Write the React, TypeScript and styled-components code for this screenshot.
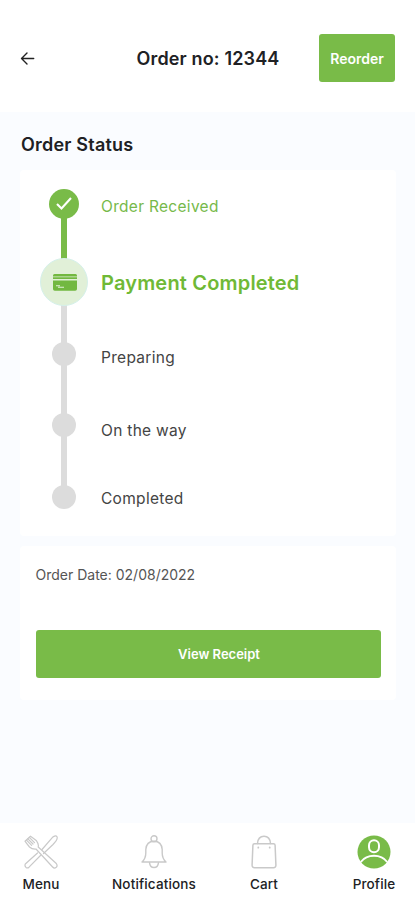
import React from "react";
import styled, { createGlobalStyle, css } from "styled-components";

const green = "#79bb48";
const idle = "#dcdcdc";

const GlobalStyle = createGlobalStyle`
  * { box-sizing: border-box; }
  body {
    margin: 0;
    background: #fafcff;
    font-family: Inter, "Liberation Sans", sans-serif;
    color: #202124;
  }
  button { font-family: inherit; border: 0; padding: 0; cursor: pointer; }
`;

const Screen = styled.div`
  display: flex;
  flex-direction: column;
  width: 415px;
  height: 900px;
  background: #fafcff;
`;

const Header = styled.header`
  display: grid;
  grid-template-columns: 76px 1fr 76px;
  align-items: center;
  height: 112px;
  padding: 4px 20px 0;
  background: #fff;
`;

const BackButton = styled.button`
  display: flex;
  width: 16px;
  height: 16px;
  background: none;
`;

const Title = styled.h1`
  margin: 0;
  padding: 1px 0 0 1px;
  font-size: 18px;
  line-height: 24px;
  font-weight: 600;
  letter-spacing: 0.15px;
  text-align: center;
  white-space: nowrap;
`;

const PrimaryButton = styled.button<{ $wide?: boolean }>`
  width: ${(p) => (p.$wide ? "345px" : "76px")};
  height: 48px;
  padding-left: ${(p) => (p.$wide ? "22px" : "0")};
  border-radius: 3px;
  background: ${green};
  color: #fff;
  font-size: ${(p) => (p.$wide ? "13px" : "14px")};
  font-weight: 600;
  white-space: nowrap;
`;

const Content = styled.main`
  flex: 1;
  padding: 20px 19px 0 20px;
`;

const SectionTitle = styled.h2`
  margin: 0 0 13px;
  padding: 0 0 0 1px;
  font-size: 18px;
  line-height: 25px;
  font-weight: 600;
  letter-spacing: 0.2px;
`;

const Card = styled.section`
  border-radius: 4px;
  background: #fff;
`;

const StatusCard = styled(Card)`
  height: 366px;
  padding: 19px 0 0 20px;
`;

const ReceiptCard = styled(Card)`
  display: flex;
  flex-direction: column;
  justify-content: space-between;
  height: 154px;
  margin-top: 10px;
  padding: 19px 16px 22.5px 15.5px;
`;

const OrderDate = styled.p`
  margin: 0;
  font-size: 14px;
  line-height: 20px;
  color: #555;
`;

const Steps = styled.ol`
  margin: 0;
  padding: 0;
  list-style: none;
`;

const Step = styled.li<{ $height: number }>`
  display: grid;
  grid-template-columns: 48px 1fr;
  column-gap: 13px;
  height: ${(p) => p.$height}px;
`;

const Rail = styled.div`
  display: flex;
  flex-direction: column;
  align-items: center;
`;

const Connector = styled.span<{ $done?: boolean }>`
  flex: 1;
  width: 6px;
  margin: -1px 1px -1px 0;
  background: ${(p) => (p.$done ? green : idle)};
`;

type State = "done" | "current" | "todo";

const Marker = styled.span<{ $state: State }>`
  display: flex;
  align-items: center;
  justify-content: center;
  flex: none;
  border-radius: 50%;
  ${(p) =>
    p.$state === "done"
      ? css`width: 30px; height: 30px; margin-right: 1px; background: ${green};`
      : p.$state === "current"
        ? css`width: 48px; height: 48px; padding-left: 1px; background: #e1f0d8; border: 1px solid #d5f0ea; z-index: 1;`
        : css`width: 24px; height: 24px; margin-right: 1px; background: ${idle};`}
`;

const StepLabel = styled.span<{ $state: State; $top: number }>`
  padding-top: ${(p) => p.$top}px;
  line-height: 24px;
  white-space: nowrap;
  ${(p) =>
    p.$state === "current"
      ? css`font-size: 20px; font-weight: 600; letter-spacing: 0.18px; color: #6fb936;`
      : css`font-size: 15.5px; font-weight: 400; letter-spacing: 0.3px; color: ${p.$state === "done" ? "#76b94a" : "#444"};`}
`;

const BottomNav = styled.nav`
  display: grid;
  grid-template-columns: 113px 110px 110px 82px;
  height: 77px;
  background: #fff;
`;

const NavItem = styled.a`
  display: flex;
  flex-direction: column;
  align-items: center;
  gap: 6px;
  width: 82px;
  padding-top: 12px;
  font-size: 13.5px;
  line-height: 19px;
  font-weight: 500;
  letter-spacing: 0.15px;
  white-space: nowrap;
  svg { display: block; flex: none; }
`;

const line = { fill: "none", stroke: "#c9c9c9", strokeWidth: 1.2, strokeLinecap: "round", strokeLinejoin: "round" } as const;

const BackIcon = () => (
  <svg width="16" height="16" viewBox="0 0 16 16" fill="none" stroke="#222" strokeWidth="1.4" strokeLinecap="round" strokeLinejoin="round">
    <path d="M13.700 8.500H1.500M7 3L1.500 8.500L7 14" />
  </svg>
);

const CheckIcon = () => (
  <svg width="18" height="16" viewBox="0 0 18 16" fill="none" stroke="#fff" strokeWidth="2.1">
    <path d="M2 8L6.500 12.500L16 2" />
  </svg>
);

const CardIcon = () => (
  <svg width="24" height="17" viewBox="0 0 24 17">
    <path fill="#72b840" d="M1.500 0h21Q24 0 24 1.500V2.400H0V1.500Q0 0 1.500 0ZM0 3.300h24v1.800H0ZM0 6.600h24V15Q24 16.800 22.200 16.800H1.800Q0 16.800 0 15Z" />
    <path d="M3 11.700h4M5 13.200h6" stroke="#e1f0d8" strokeWidth="1.100" />
  </svg>
);

const CutleryIcon = () => (
  <svg width="34" height="34" viewBox="0 0 34 34" {...line}>
    <path d="M18 14.500L28.500 2.300Q31.800-.2 33 1.700Q34.200 4.200 29 9.500L19.500 18.500M13.500 18L1.300 29Q.4 31 2 32.400Q3.600 33.500 5 32.200L16.500 20.500" />
    <path d="M6.500 1.200Q10 3.600 12.500 5.800Q15 9 14.200 12L32.300 28.500Q34 31 32 32.600Q30.200 33.700 28.600 32L12 14Q8 14.300 5.500 12Q2.500 8.500 1 6.200Z" />
    <path d="M3.900 3.800L9 9M5.300 2.400L10.500 7.600M2.500 5.200L7.600 10.300" />
  </svg>
);

const BellIcon = () => (
  <svg width="26" height="34" viewBox="0 0 26 34" {...line} strokeWidth={1.4}>
    <circle cx="13" cy="3.800" r="3" />
    <path d="M1 27Q4.800 23.500 4.800 18V14.500Q5.400 6.200 13 6.200Q20.600 6.200 21.200 14.500V18Q21.200 23.500 25 27Z" />
    <path d="M8.500 27.600Q9 32.500 13 32.500Q17 32.500 17.500 27.600" />
  </svg>
);

const BagIcon = () => (
  <svg width="26" height="34" viewBox="0 0 26 34" {...line} strokeWidth={1.5}>
    <path d="M3.500 8.800H22.500Q24 8.800 24.100 10.300L24.900 30Q25 32.800 22.400 32.800H3.600Q1 32.800 1.100 30L1.900 10.300Q2 8.800 3.500 8.800Z" />
    <path d="M6.500 8.500Q7 1.300 13 1.300Q19 1.300 19.500 8.500" />
    <path d="M7.300 12.500v.2M18.700 12.500v.2" strokeWidth="1.8" />
  </svg>
);

const ProfileIcon = () => (
  <svg width="34" height="34" viewBox="0 0 34 34">
    <circle cx="17" cy="17" r="16.500" fill={green} />
    <g fill="none" stroke="#fff" strokeWidth="2">
      <rect x="12" y="5.300" width="10" height="12" rx="5" />
      <path d="M3.800 27Q8.500 20.800 17 20.800Q25.500 20.800 30.200 27" />
    </g>
  </svg>
);

const steps: { label: string; state: State; height: number; top: number }[] = [
  { label: "Order Received", state: "done", height: 69, top: 6 },
  { label: "Payment Completed", state: "current", height: 84, top: 13 },
  { label: "Preparing", state: "todo", height: 71, top: 4 },
  { label: "On the way", state: "todo", height: 72, top: 6 },
  { label: "Completed", state: "todo", height: 24, top: 2 },
];

const navItems = [
  { label: "Menu", Icon: CutleryIcon },
  { label: "Notifications", Icon: BellIcon },
  { label: "Cart", Icon: BagIcon },
  { label: "Profile", Icon: ProfileIcon },
];

export default function App() {
  return (
    <>
      <GlobalStyle />
      <Screen>
        <Header>
          <BackButton aria-label="Back"><BackIcon /></BackButton>
          <Title>Order no: 12344</Title>
          <PrimaryButton>Reorder</PrimaryButton>
        </Header>
        <Content>
          <SectionTitle>Order Status</SectionTitle>
          <StatusCard>
            <Steps>
              {steps.map((s, i) => (
                <Step key={s.label} $height={s.height}>
                  <Rail>
                    <Marker $state={s.state}>
                      {s.state === "done" && <CheckIcon />}
                      {s.state === "current" && <CardIcon />}
                    </Marker>
                    {i < steps.length - 1 && <Connector $done={s.state === "done"} />}
                  </Rail>
                  <StepLabel $state={s.state} $top={s.top}>{s.label}</StepLabel>
                </Step>
              ))}
            </Steps>
          </StatusCard>
          <ReceiptCard>
            <OrderDate>Order Date: 02/08/2022</OrderDate>
            <PrimaryButton $wide>View Receipt</PrimaryButton>
          </ReceiptCard>
        </Content>
        <BottomNav>
          {navItems.map(({ label, Icon }) => (
            <NavItem key={label}>
              <Icon />
              {label}
            </NavItem>
          ))}
        </BottomNav>
      </Screen>
    </>
  );
}
